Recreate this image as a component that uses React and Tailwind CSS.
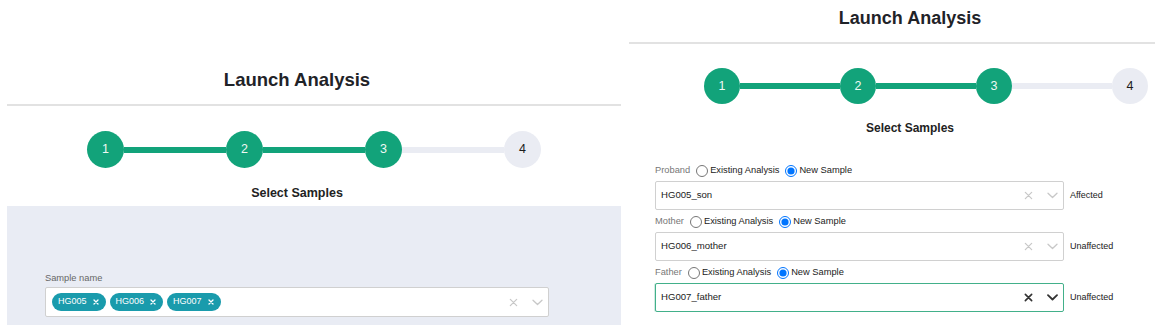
import React from 'react';

const GREEN = 'bg-[#12a37a]';

const Stepper = ({ size, line, active, className }) => {
  const steps = [1, 2, 3, 4];
  return (
    <div className={`flex items-center ${className}`}>
      {steps.map((n, i) => (
        <React.Fragment key={n}>
          {i > 0 && (
            <div
              className={`h-[6px] ${n <= active ? GREEN : 'bg-[#eaecf3]'}`}
              style={{ width: line }}
            />
          )}
          <div
            className={`flex items-center justify-center rounded-full text-[12.5px] ${
              n <= active ? `${GREEN} text-[#eef8f3]` : 'bg-[#eaecf3] text-[#1c1c1c]'
            }`}
            style={{ width: size, height: size }}
          >
            {n}
          </div>
        </React.Fragment>
      ))}
    </div>
  );
};

const ClearIcon = ({ dark }) => (
  <svg width="9" height="9" viewBox="0 0 10 10" className="shrink-0">
    <path
      d="M1.5 1.5 L8.5 8.5 M8.5 1.5 L1.5 8.5"
      stroke={dark ? '#333' : '#c8c8c8'}
      strokeWidth={dark ? 1.8 : 1.4}
      strokeLinecap="round"
    />
  </svg>
);

const ChevronIcon = ({ dark }) => (
  <svg width="11" height="7" viewBox="0 0 11 7" className="shrink-0">
    <path
      d="M1 1.2 L5.5 5.5 L10 1.2"
      fill="none"
      stroke={dark ? '#333' : '#c8c8c8'}
      strokeWidth={dark ? 1.8 : 1.3}
      strokeLinecap="round"
      strokeLinejoin="round"
    />
  </svg>
);

const Chip = ({ label }) => (
  <span className="flex h-[18px] items-center gap-[6px] rounded-full bg-[#1a9bac] pl-[6px] pr-[7px] text-[9px] text-white">
    {label}
    <svg width="6" height="6" viewBox="0 0 6 6">
      <path d="M1 1 L5 5 M5 1 L1 5" stroke="#fff" strokeWidth="1.3" strokeLinecap="round" />
    </svg>
  </span>
);

const Radio = ({ name, checked, label }) => (
  <label className="flex items-center gap-[2px] text-[#222]">
    <input
      type="radio"
      name={name}
      defaultChecked={checked}
      className="m-0 h-[12px] w-[12px]"
    />
    {label}
  </label>
);

const SampleRow = ({ role, value, status, focused }) => (
  <div className="mb-[4px]">
    <div className="flex h-[16px] items-center gap-[6px] text-[9.3px]">
      <span className="text-[#777]">{role}</span>
      <Radio name={role} label="Existing Analysis" />
      <Radio name={role} checked label="New Sample" />
    </div>
    <div className="mt-[2px] flex items-center gap-[6px]">
      <div
        className={
          focused
            ? 'flex h-[29px] w-[409px] items-center rounded-[2px] border border-solid border-[#42b08a] bg-white pl-[5px] pr-[5px] shadow-[-1px_0_0_0_rgba(66,176,138,0.25)]'
            : 'flex h-[29px] w-[409px] items-center rounded-[2px] border border-solid border-[#d0d0d0] bg-white pl-[5px] pr-[5px]'
        }
      >
        <span className="flex-1 text-[9.6px] text-[#222]">{value}</span>
        <ClearIcon dark={focused} />
        <span className="w-[14px]" />
        <ChevronIcon dark={focused} />
      </div>
      <span className="text-[9px] text-[#222]">{status}</span>
    </div>
  </div>
);

export default function App() {
  return (
    <div className="flex items-start bg-white font-['Liberation_Sans',Arial,sans-serif] text-[#222]">
      {/* left panel */}
      <div className="ml-[7px] flex w-[614px] flex-col pt-[70px]">
        <h1 className="pr-[34px] text-center text-[18.5px] font-bold leading-[20px] text-[#1f2328]">
          Launch Analysis
        </h1>
        <div className="mt-[14px] h-[2px] bg-[#e2e2e2]" />
        <Stepper size={37} line={102} active={3} className="mx-auto mt-[25px]" />
        <p className="mt-[17px] pr-[34px] text-center text-[12.5px] font-bold leading-[16px]">
          Select Samples
        </p>
        <div className="mt-[5px] h-[119px] bg-[#e9ecf4] pl-[38px] pt-[65px]">
          <div className="text-[9.3px] leading-[14px] text-[#666]">Sample name</div>
          <div className="mt-[2px] flex h-[30px] w-[504px] items-center gap-[4px] rounded-[2px] border border-[#d0d0d0] bg-white pl-[6px] pr-[5px]">
            <Chip label="HG005" />
            <Chip label="HG006" />
            <Chip label="HG007" />
            <span className="flex-1" />
            <ClearIcon />
            <span className="w-[6px]" />
            <ChevronIcon />
          </div>
        </div>
      </div>

      {/* right panel */}
      <div className="ml-[8px] flex w-[526px] flex-col pt-[8px]">
        <h1 className="pl-[36px] text-center text-[18px] font-bold leading-[20px] text-[#1f2328]">
          Launch Analysis
        </h1>
        <div className="mt-[14px] h-[2px] bg-[#e2e2e2]" />
        <Stepper size={36} line={100} active={3} className="ml-[75px] mt-[24px]" />
        <p className="mt-[16px] pl-[36px] text-center text-[12px] font-bold leading-[16px]">
          Select Samples
        </p>
        <div className="mt-[27px] pl-[26px]">
          <SampleRow role="Proband" value="HG005_son" status="Affected" />
          <SampleRow role="Mother" value="HG006_mother" status="Unaffected" />
          <SampleRow role="Father" value="HG007_father" status="Unaffected" focused />
        </div>
      </div>
    </div>
  );
}
